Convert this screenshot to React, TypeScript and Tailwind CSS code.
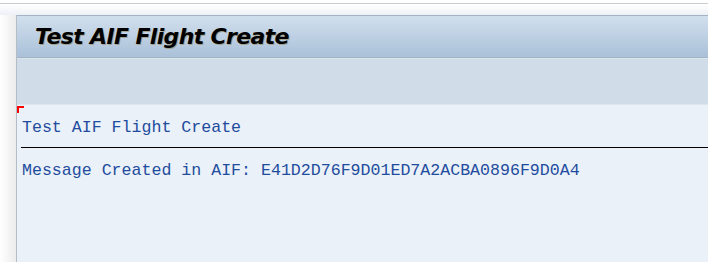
export default function App() {
  return (
    <div className="w-[708px] h-[262px] flex flex-col bg-white overflow-hidden">
      <div className="h-[3px] bg-white" />
      <div className="h-px bg-[#c9ccd0]" />
      <div className="h-[11px] bg-gradient-to-b from-white to-[#edf1f6]" />
      <div className="flex flex-1 min-h-0">
        <div className="w-[17px] bg-gradient-to-r from-white to-[#ececec] border-r border-[#b4bcc5]" />
        <div className="flex-1 flex flex-col min-w-0">
          {/* Title bar */}
          <div className="h-[43px] shrink-0 border-t border-[#a3b3c4] border-b border-[#95a7ba] bg-gradient-to-b from-[#d1dfed] to-[#aac1d9] flex items-center pl-[18px]">
            <h1
              className="text-[22px] font-bold italic text-black tracking-[-0.65px] [text-shadow:1px_1px_0_rgba(140,110,40,0.45)]"
              style={{ fontFamily: 'Tahoma, "DejaVu Sans", Verdana, sans-serif' }}
            >
              Test AIF Flight Create
            </h1>
          </div>
          {/* Toolbar */}
          <div className="h-[47px] shrink-0 bg-[#d0dde8] border-t border-[#dce6ef] border-b border-[#a0b0c1]" />
          {/* Content */}
          <div
            className="relative flex-1 bg-[#eaf1f8] text-[#1f4c9e] text-[16.6px] leading-[18px]"
            style={{ fontFamily: '"Liberation Mono", "Courier New", monospace' }}
          >
            <div className="absolute left-0 top-px w-[7px] h-[1.5px] bg-[#ff0000]" />
            <div className="absolute left-0 top-px w-[1.5px] h-[7px] bg-[#ff0000]" />
            <div className="pt-[14px] pl-[5px] whitespace-pre">Test AIF Flight Create</div>
            <div className="mt-[10px] ml-[4px] h-px bg-black" />
            <div className="pt-[14px] pl-[5px] whitespace-pre">Message Created in AIF: E41D2D76F9D01ED7A2ACBA0896F9D0A4</div>
          </div>
        </div>
      </div>
    </div>
  );
}
